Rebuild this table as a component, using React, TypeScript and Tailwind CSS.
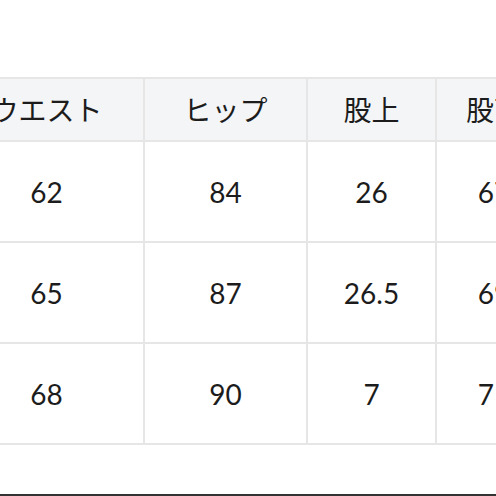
import React from 'react';

const headers = ['ウエスト', 'ヒップ', '股上', '股下'];
const rows = [
  ['62', '84', '26', '67'],
  ['65', '87', '26.5', '69'],
  ['68', '90', '7', '71'],
];

const widths = ['w-[195px]', 'w-[163px]', 'w-[129px]', 'w-[116px]'];

const App: React.FC = () => {
  return (
    <div
      className="w-[496px] h-[496px] overflow-hidden bg-white flex flex-col"
      style={{ fontFamily: 'Lato, "Noto Sans CJK JP", sans-serif' }}
    >
      <div className="h-[77px] shrink-0" />
      <div className="ml-[-52px] w-max shrink-0">
        <table className="table-fixed w-[605px] border-collapse text-[28px] text-[#1c1c1c]">
          <thead>
            <tr className="bg-[#f3f5f7]">
              {headers.map((h, i) => (
                <th key={h} className={`${widths[i]} h-[63px] border-2 border-[#e6e6e6] font-normal text-center p-0 whitespace-nowrap`}>
                  {h}
                </th>
              ))}
            </tr>
          </thead>
          <tbody>
            {rows.map((r, ri) => (
              <tr key={ri}>
                {r.map((c, ci) => (
                  <td key={ci} className="h-[101px] border-2 border-[#e6e6e6] text-center p-0">
                    {c}
                  </td>
                ))}
              </tr>
            ))}
          </tbody>
        </table>
      </div>
      <div className="flex-1" />
      <div className="h-[2px] bg-[#333333] shrink-0" />
    </div>
  );
};

export default App;
